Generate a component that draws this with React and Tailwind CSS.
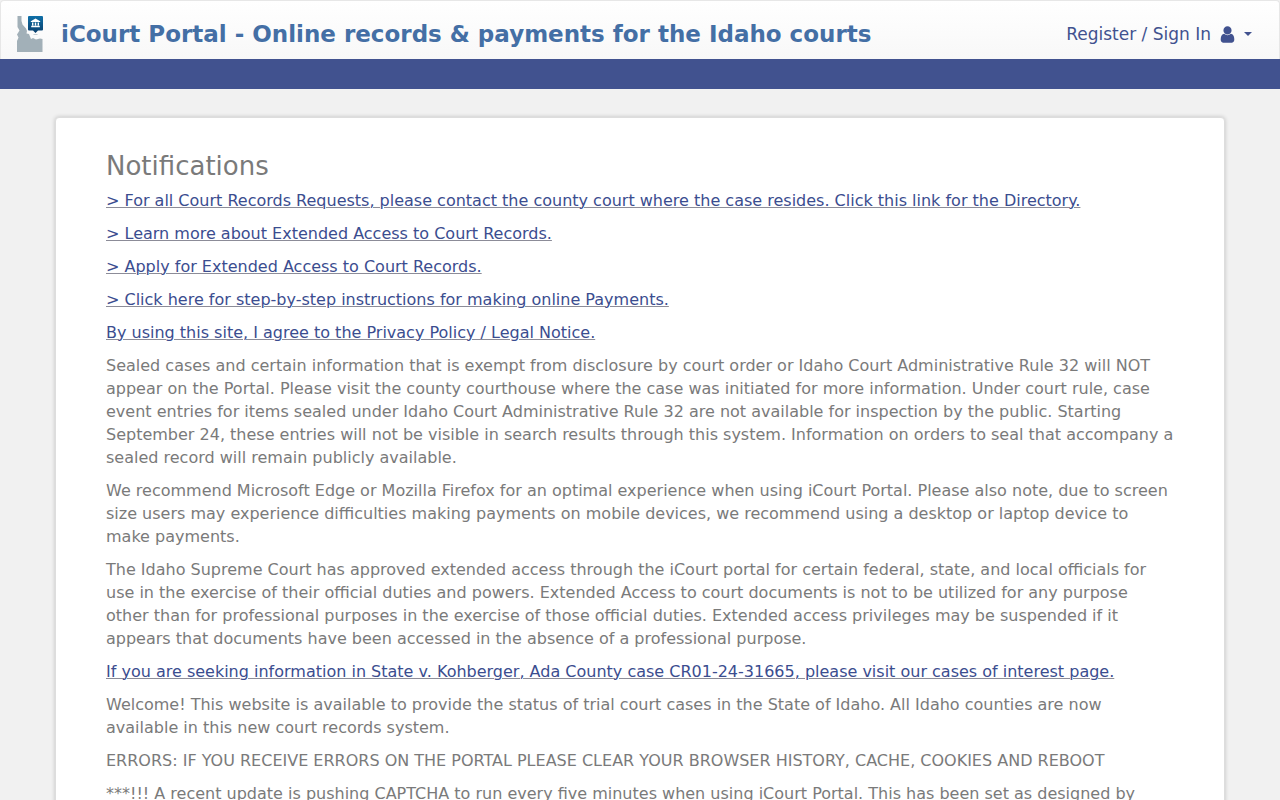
const notices = [
  { text: '> For all Court Records Requests, please contact the county court where the case resides. Click this link for the Directory.', link: true },
  { text: '> Learn more about Extended Access to Court Records.', link: true },
  { text: '> Apply for Extended Access to Court Records.', link: true },
  { text: '> Click here for step-by-step instructions for making online Payments.', link: true },
  { text: 'By using this site, I agree to the Privacy Policy / Legal Notice.', link: true },
  { text: 'Sealed cases and certain information that is exempt from disclosure by court order or Idaho Court Administrative Rule 32 will NOT appear on the Portal. Please visit the county courthouse where the case was initiated for more information. Under court rule, case event entries for items sealed under Idaho Court Administrative Rule 32 are not available for inspection by the public. Starting September 24, these entries will not be visible in search results through this system. Information on orders to seal that accompany a sealed record will remain publicly available.' },
  { text: 'We recommend Microsoft Edge or Mozilla Firefox for an optimal experience when using iCourt Portal. Please also note, due to screen size users may experience difficulties making payments on mobile devices, we recommend using a desktop or laptop device to make payments.' },
  { text: 'The Idaho Supreme Court has approved extended access through the iCourt portal for certain federal, state, and local officials for use in the exercise of their official duties and powers. Extended Access to court documents is not to be utilized for any purpose other than for professional purposes in the exercise of those official duties. Extended access privileges may be suspended if it appears that documents have been accessed in the absence of a professional purpose.' },
  { text: 'If you are seeking information in State v. Kohberger, Ada County case CR01-24-31665, please visit our cases of interest page.', link: true },
  { text: 'Welcome! This website is available to provide the status of trial court cases in the State of Idaho. All Idaho counties are now available in this new court records system.' },
  { text: 'ERRORS: IF YOU RECEIVE ERRORS ON THE PORTAL PLEASE CLEAR YOUR BROWSER HISTORY, CACHE, COOKIES AND REBOOT' },
  { text: '***!!! A recent update is pushing CAPTCHA to run every five minutes when using iCourt Portal. This has been set as designed by' },
];

function Logo() {
  return (
    <svg viewBox="0 0 28 36" className="h-9 w-7 shrink-0" aria-hidden="true">
      <defs>
        <linearGradient id="pin" x1="0" y1="0" x2="0" y2="1">
          <stop offset="0" stopColor="#0f70a8" />
          <stop offset="1" stopColor="#0b3f6c" />
        </linearGradient>
      </defs>
      {/* State outline */}
      <path
        d="M2.500 0H6.500V5L7.500 8.500L11 12.500L12 15L11.500 17.500L14 18L16 23L18 22L21 23.500L25 22.500L27.500 23V36H2V25L3.500 21.500L2 18.500L4.500 14.500L2.500 11Z"
        fill="#a2b0b8"
      />
      {/* Map pin */}
      <path
        d="M14 0H27Q28 0 28 1V13.500Q28 14.500 27 14.500H23L20.500 17L18 14.500H14Q13 14.500 13 13.500V1Q13 0 14 0Z"
        fill="url(#pin)"
      />
      <path
        d="M15.800 5.200L20.500 2.500L25.200 5.200V6H15.800ZM17 6.500H18.400V9.500H17ZM19.800 6.500H21.200V9.500H19.800ZM22.600 6.500H24V9.500H22.600ZM16.200 9.800H24.800V11.300H16.200Z"
        fill="#fff"
      />
      <path d="M18.500 18.500H22.500" stroke="#b7c2c8" strokeWidth="0.8" />
    </svg>
  );
}

function UserIcon() {
  return (
    <svg viewBox="0 0 1792 1792" className="size-[19px]" fill="currentColor" aria-hidden="true">
      <path d="M1536 1399q0 109-62.500 187t-150.500 78h-854q-88 0-150.500-78t-62.500-187q0-85 8.500-160.500t31.500-152 58.500-131 94-89 134.500-34.500q131 128 313 128t313-128q76 0 134.500 34.500t94 89 58.500 131 31.500 152 8.500 160.500zM1280 512q0 159-112.500 271.500t-271.500 112.500-271.500-112.500-112.500-271.500 112.500-271.500 271.500-112.500 271.500 112.500 112.500 271.500z" />
    </svg>
  );
}

export default function App() {
  return (
    <div className="min-h-screen bg-[#f1f1f1] font-['DejaVu_Sans',sans-serif] text-base text-[#7a7a7a]">
      {/* Header */}
      <header>
        <div className="flex h-[59px] items-center justify-between rounded-t border border-b-0 border-[#e7e7e7] bg-linear-to-b from-white to-[#f8f8f8] pt-2 pr-[27px] pl-[14px]">
          <a href="#" className="flex items-center gap-[18px]">
            <Logo />
            <span className="text-[23px] leading-8 font-bold text-[#446fa5]">
              iCourt Portal - Online records &amp; payments for the Idaho courts
            </span>
          </a>
          <button type="button" className="flex items-center gap-[7px] text-[17px] leading-6 text-[#41528f]">
            <span>Register / Sign In</span>
            <UserIcon />
            <svg viewBox="0 0 8 4" className="h-1 w-2" fill="currentColor" aria-hidden="true">
              <path d="M0 0H8L4 4Z" />
            </svg>
          </button>
        </div>
        <div className="h-[30px] bg-[#41528f]" />
      </header>

      {/* Notifications */}
      <main className="mx-auto mt-7 max-w-[1170px] rounded border border-[#dddddd] bg-white px-[50px] pt-8 pb-12 shadow-[0_0_4px_rgba(0,0,0,0.2)]">
        <h1 className="mb-[7px] text-[26px] leading-8">Notifications</h1>
        <div className="flex flex-col gap-[10px] leading-[23px]">
          {notices.map((notice) => (
            <p key={notice.text}>
              {notice.link ? (
                <a href="#" className="text-[#3b4d8f] underline decoration-[#8c8c98] decoration-1 hover:text-[#26356b]">
                  {notice.text}
                </a>
              ) : (
                notice.text
              )}
            </p>
          ))}
        </div>
      </main>
    </div>
  );
}
